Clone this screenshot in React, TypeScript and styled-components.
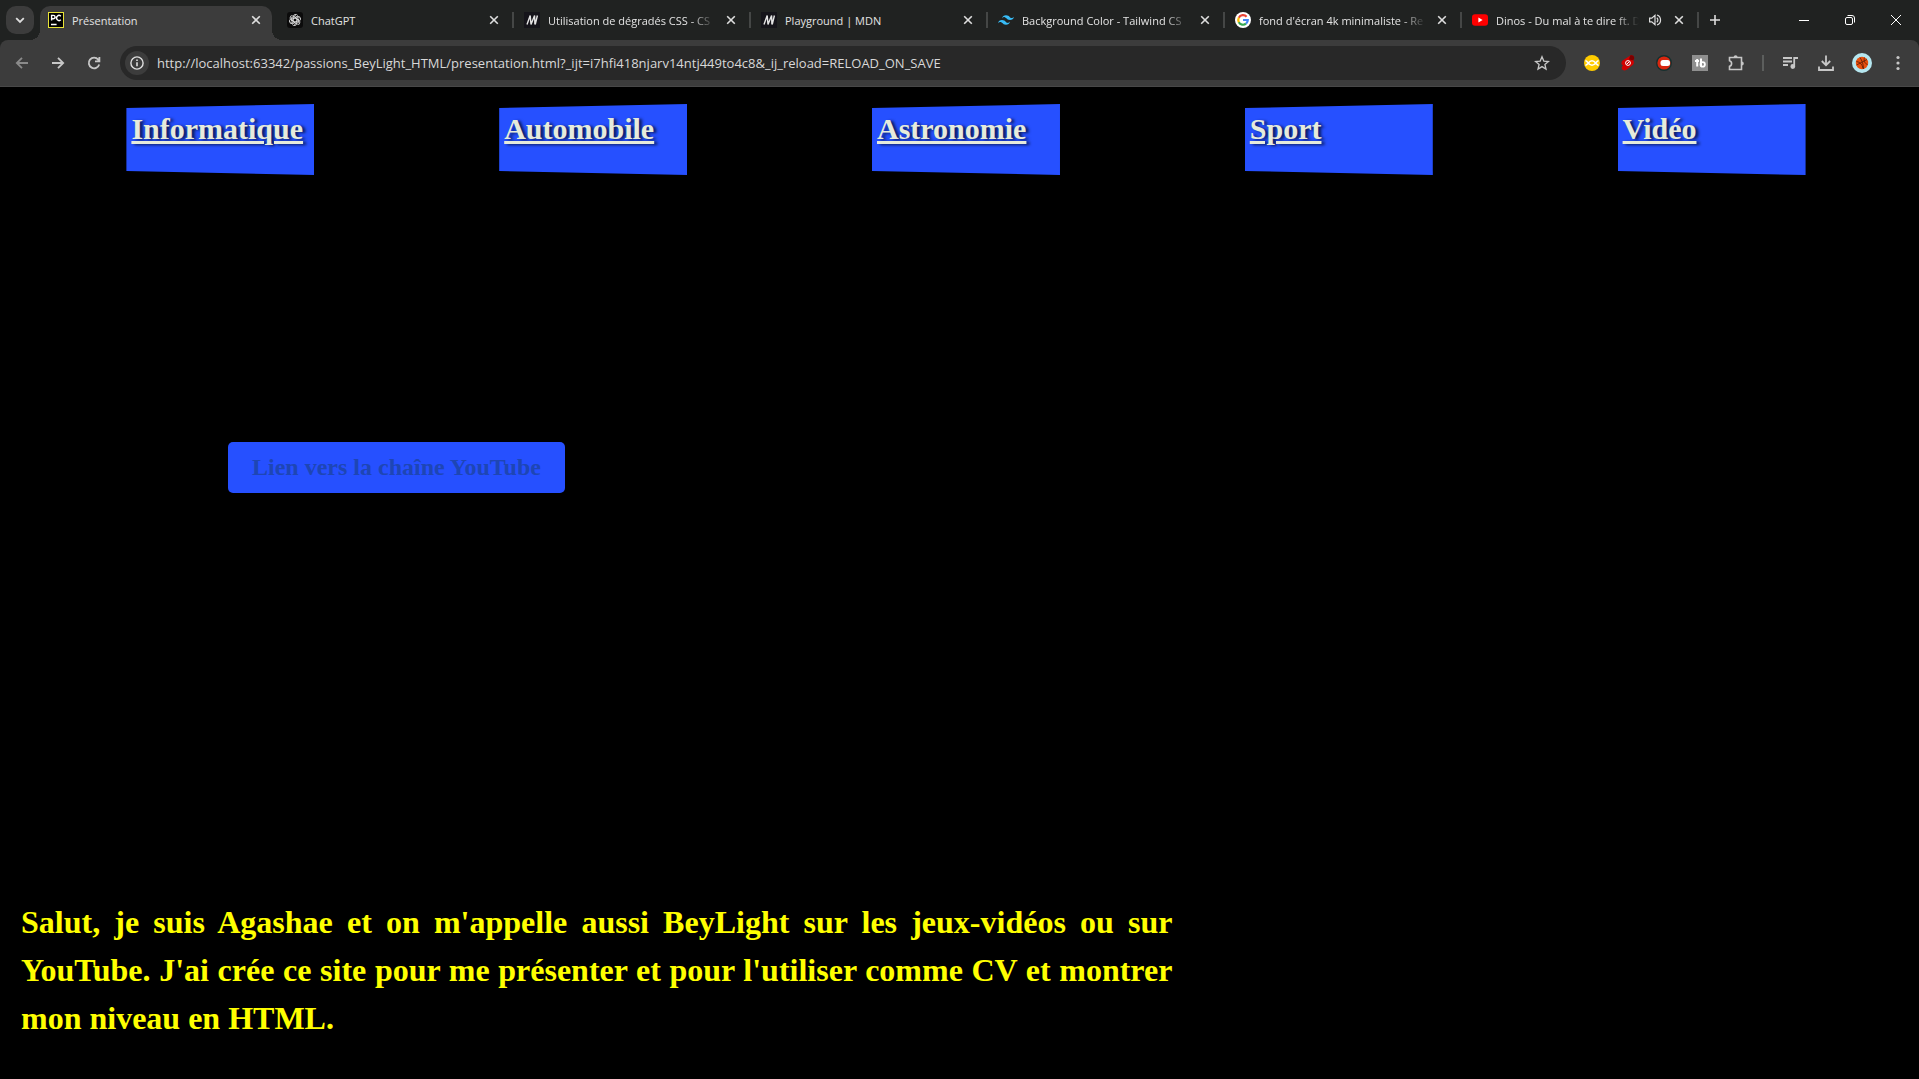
import React from 'react';
import styled, { createGlobalStyle, css } from 'styled-components';

const GlobalStyle = createGlobalStyle`
  *, *::before, *::after { box-sizing: border-box; }
  html, body, #root { height: 100%; }
  body {
    margin: 0;
    background: #000;
    overflow: hidden;
    font-family: "Liberation Serif", "Times New Roman", serif;
  }
`;

const Screen = styled.div`
  min-height: 100%;
  display: flex;
  flex-direction: column;
`;

const Browser = styled.header`
  background: #202221;
  color: #e3e3e3;
  font-family: "Open Sans", "Noto Sans", sans-serif;
`;

const TabStrip = styled.div`
  display: flex;
  height: 40px;
  padding-left: 6px;
`;

const iconButton = css`
  display: flex;
  align-items: center;
  justify-content: center;
  flex: none;
  padding: 0;
  border: 0;
  background: transparent;
  color: #dedede;
`;

const TabSearch = styled.button`
  ${iconButton}
  width: 28px;
  height: 28px;
  margin: 6px 6px 0 0;
  border-radius: 10px;
  background: #3c3c3c;
`;

const Tab = styled.div<{ $active?: boolean; $line?: boolean }>`
  position: relative;
  display: flex;
  align-items: center;
  gap: 8px;
  flex: 0 1 237px;
  min-width: 0;
  height: 40px;
  padding: 0 11px;
  ${p => p.$line && css`
    &::after {
      content: '';
      position: absolute;
      right: -1px;
      top: 12px;
      width: 2px;
      height: 16px;
      background: #454746;
    }
  `}
  ${p => p.$active && css`
    flex-basis: 232px;
    height: 34px;
    margin: 6px 4px 0 0;
    padding: 0 8px 6px 8px;
    border-radius: 10px 10px 0 0;
    background: #3c3c3c;
    &::before, &::after {
      content: '';
      position: absolute;
      bottom: 0;
      width: 10px;
      height: 10px;
    }
    &::before {
      left: -10px;
      background: radial-gradient(circle at 0 0, transparent 10px, #3c3c3c 10px);
    }
    &::after {
      right: -10px;
      background: radial-gradient(circle at 100% 0, transparent 10px, #3c3c3c 10px);
    }
  `}
`;

const TabTitle = styled.span<{ $fade?: boolean }>`
  flex: 1;
  min-width: 0;
  padding-top: 2px;
  overflow: hidden;
  white-space: nowrap;
  font-size: 11px;
  line-height: 16px;
  ${p => p.$fade && css`
    mask-image: linear-gradient(to left, transparent, #000 24px);
  `}
`;

const SmallButton = styled.button`
  ${iconButton}
  width: 16px;
  height: 16px;
`;

const NewTab = styled.button`
  ${iconButton}
  width: 28px;
  height: 28px;
  margin: 6px 0 0 3px;
`;

const WindowControls = styled.div`
  display: flex;
  margin-left: auto;
`;

const WindowButton = styled.button`
  ${iconButton}
  width: 46px;
  height: 40px;
  color: #fff;
`;

const Toolbar = styled.div`
  display: flex;
  align-items: center;
  height: 47px;
  padding: 0 3px 1px 4px;
  border-radius: 8px 8px 0 0;
  border-bottom: 1px solid #484848;
  background: #3c3c3c;
`;

const ToolButton = styled.button<{ $dim?: boolean }>`
  ${iconButton}
  width: 36px;
  height: 34px;
  color: ${p => (p.$dim ? '#8a8a8a' : '#c7c7c7')};
`;

const AddressBar = styled.div`
  display: flex;
  align-items: center;
  flex: 1;
  min-width: 0;
  height: 34px;
  margin: 0 8px;
  padding: 0 6px 0 5px;
  border-radius: 17px;
  background: #282828;
`;

const SiteInfo = styled.button`
  ${iconButton}
  width: 24px;
  height: 24px;
  border-radius: 50%;
  background: #3c3c3c;
`;

const Address = styled.input`
  flex: 1;
  min-width: 0;
  margin: 0;
  padding: 0 0 0 8px;
  border: 0;
  outline: 0;
  background: transparent;
  color: #d8d8d8;
  font: 13px/20px "Open Sans", "Noto Sans", sans-serif;
`;

const ToolDivider = styled.span`
  flex: none;
  width: 2px;
  height: 16px;
  margin: 0 8px;
  background: #5c5e5d;
`;

const Page = styled.main`
  flex: 1;
  display: flex;
  flex-direction: column;
  align-items: flex-start;
  background: #000;
`;

const Passions = styled.nav`
  display: flex;
  justify-content: space-around;
  align-self: stretch;
  padding: 17px 21px 0 34px;
`;

const Passion = styled.a`
  width: 188px;
  height: 71px;
  padding: 8px 5px;
  background: #2650ff;
  clip-path: polygon(0 4px, 100% 0, 100% 100%, 0 calc(100% - 4px));
  color: #e6ebdc;
  font-size: 30px;
  font-weight: bold;
  line-height: 34px;
  text-decoration: underline;
  text-shadow: 3px 1px 3px #0a1c60;
`;

const ChannelLink = styled.a`
  margin: 267px 0 0 228px;
  padding: 12px 24px;
  border-radius: 5px;
  background: #2650ff;
  color: #1e46b4;
  font-size: 24px;
  font-weight: bold;
  line-height: 27px;
  text-decoration: none;
`;

const Introduction = styled.p`
  width: 60%;
  margin: auto 0 0 21px;
  padding-bottom: 37px;
  color: #ff0;
  font-size: 32px;
  font-weight: bold;
  line-height: 48px;
  text-align: justify;
`;

const CloseIcon = () => (
  <svg width="16" height="16" viewBox="0 0 16 16" stroke="currentColor" strokeWidth="1.6">
    <path d="M4.2 4.2l7.6 7.6M11.8 4.2l-7.6 7.6" />
  </svg>
);

const PyCharmIcon = () => (
  <svg width="16" height="16" viewBox="0 0 16 16">
    <rect x=".5" y=".5" width="15" height="15" fill="#000" stroke="#e8e337" />
    <g fill="none" stroke="#fff" strokeWidth="1.4">
      <path d="M3.6 8.6V3.4h1.8a1.6 1.6 0 0 1 0 3.3H3.6M12.8 4.2a2.5 2.5 0 1 0 0 3.6M3 12.5h5.6" />
    </g>
  </svg>
);

const ChatGptIcon = () => (
  <svg width="16" height="16" viewBox="0 0 16 16">
    <rect width="16" height="16" rx="3" fill="#0b0b0b" />
    <g fill="none" stroke="#ddd" strokeWidth=".9">
      {[0, 60, 120, 180, 240, 300].map(a => (
        <path key={a} transform={`rotate(${a} 8 8)`} d="M6 9.2V5a2.6 2.6 0 0 1 4.8-1.4M6.1 6.8l3.5-2 2.6 1.5" />
      ))}
    </g>
  </svg>
);

const MdnIcon = () => (
  <svg width="16" height="16" viewBox="0 0 16 16">
    <rect width="16" height="16" fill="#15141a" />
    <path d="M3 12.5L6.2 3.5 7 12.5 10.6 3.5l.3 9M13.4 3.5l-2.2 9" fill="none" stroke="#e4e4e4" strokeWidth="1.4" />
  </svg>
);

const TailwindIcon = () => (
  <svg width="16" height="16" viewBox="0 0 24 24" fill="#38bdf8">
    <path d="M12 4.8c-3.2 0-5.2 1.6-6 4.8 1.2-1.6 2.6-2.2 4.2-1.8.91.23 1.57.89 2.29 1.62C13.67 10.62 15.03 12 18 12c3.2 0 5.2-1.6 6-4.8-1.2 1.6-2.6 2.2-4.2 1.8-.91-.23-1.57-.89-2.29-1.62C16.34 6.18 14.97 4.8 12 4.8zM6 12c-3.2 0-5.2 1.6-6 4.8 1.2-1.6 2.6-2.2 4.2-1.8.91.23 1.57.89 2.29 1.62C7.67 17.82 9.03 19.2 12 19.2c3.2 0 5.2-1.6 6-4.8-1.2 1.6-2.6 2.2-4.2 1.8-.91-.23-1.57-.89-2.29-1.62C10.33 13.38 8.97 12 6 12z" />
  </svg>
);

const GoogleIcon = () => (
  <svg width="16" height="16" viewBox="0 0 16 16">
    <circle cx="8" cy="8" r="8" fill="#fff" />
    <g fill="none" strokeWidth="2.2">
      <path d="M11.6 4.7A4.8 4.8 0 0 0 3.8 5.7" stroke="#ea4335" />
      <path d="M3.9 5.6a4.8 4.8 0 0 0 0 4.8" stroke="#fbbc05" />
      <path d="M3.8 10.3a4.8 4.8 0 0 0 7.2 1.4" stroke="#34a853" />
      <path d="M8 8h4.8a4.8 4.8 0 0 1-1.7 3.6" stroke="#4285f4" />
    </g>
  </svg>
);

const YouTubeIcon = () => (
  <svg width="16" height="16" viewBox="0 0 16 16">
    <rect y="2.3" width="16" height="11.4" rx="3" fill="#f00" />
    <path d="M6.4 5.6v4.8L10.6 8z" fill="#fff" />
  </svg>
);

const stroke = { fill: 'none', stroke: 'currentColor', strokeWidth: 1.8 } as const;

const SpeakerIcon = () => (
  <svg width="16" height="16" viewBox="0 0 16 16" {...stroke} strokeWidth="1.2">
    <path d="M2.6 6.2h2.2L8 3.4v9.2L4.8 9.8H2.6z" />
    <path d="M9.8 5.8a2.8 2.8 0 0 1 0 4.4M10 3a5.3 5.3 0 0 1 0 10" />
  </svg>
);

const ArrowIcon = ({ back }: { back?: boolean }) => (
  <svg width="16" height="16" viewBox="0 0 16 16" {...stroke}>
    {back ? <path d="M14 8H3M8 2.8L2.8 8 8 13.2" /> : <path d="M2 8h11M8 2.8L13.2 8 8 13.2" />}
  </svg>
);

const ReloadIcon = () => (
  <svg width="16" height="16" viewBox="0 0 16 16" {...stroke}>
    <path d="M13.2 9.4A5.3 5.3 0 1 1 12.2 4.6l1 1.2M13.4 2v4.4H9" />
  </svg>
);

const InfoIcon = () => (
  <svg width="16" height="16" viewBox="0 0 16 16" {...stroke} strokeWidth="1.4">
    <circle cx="8" cy="8" r="6.1" />
    <path d="M8 7.2v4M8 4.6v1.5" strokeWidth="1.6" />
  </svg>
);

const StarIcon = () => (
  <svg width="16" height="16" viewBox="0 0 16 16" {...stroke} strokeWidth="1.3">
    <path d="M8 1.8l1.8 4.3 4.6.4-3.5 3 1.1 4.6L8 11.6l-4 2.5 1.1-4.6-3.5-3 4.6-.4z" />
  </svg>
);

const CoinIcon = () => (
  <svg width="16" height="16" viewBox="0 0 16 16">
    <circle cx="8" cy="8" r="8" fill="#fc0" />
    <path d="M1.4 5.8C4 5.8 4.400 10.200 8 10.200S12 5.800 14.600 5.800M1.400 10.200C4 10.200 4.400 5.800 8 5.800s4 4.400 6.600 4.400" fill="none" stroke="#fff" strokeWidth="1.5" />
  </svg>
);

const ShortsIcon = () => (
  <svg width="16" height="16" viewBox="0 0 16 16">
    <path d="M3 5.2L10 .7c2.2-1 4.2.4 4.2 2.2 0 1.1-.5 1.900-1.500 2.400 1.300.4 1.300 1.600 1.100 2.800-.1.900-.6 1.600-1.400 2.100L6.300 15c-2 1.200-4.500 0-4.600-2 0-1.200.5-2 1.500-2.500C1.900 10.100 1.300 9 1.500 7.700 1.600 6.600 2.100 5.800 3 5.200z" fill="#d00000" />
    <path d="M10 .7c2.200-1 4.200.4 4.200 2.200 0 1.100-.5 1.900-1.500 2.400L9 4.500z" fill="#7c0000" />
    <circle cx="8" cy="8" r="2.400" fill="none" stroke="#fff" strokeWidth="1" />
    <path d="M6.500 9.500l3-3" stroke="#fff" />
  </svg>
);

const BlockerIcon = () => (
  <svg width="16" height="16" viewBox="0 0 16 16">
    <circle cx="8" cy="8" r="7.300" fill="#d8260f" stroke="#15302f" strokeWidth="1.400" />
    <rect x="4.500" y="5" width="9.500" height="6" rx="2.500" fill="#fff" />
  </svg>
);

const BuddyIcon = () => (
  <svg width="16" height="16" viewBox="0 0 16 16">
    <rect width="16" height="16" fill="#8f8f8f" />
    <path d="M3 6h4M5.200 4v7.500M9 3.500v8" stroke="#fff" strokeWidth="2" />
    <circle cx="10.700" cy="9.400" r="2.200" fill="none" stroke="#fff" strokeWidth="1.800" />
  </svg>
);

const PuzzleIcon = () => (
  <svg width="18" height="18" viewBox="0 0 18 18" {...stroke} strokeWidth="1.600">
    <path d="M2.500 3.500H14.500V15.500H2.500V12.300C5.300 11.700 5.300 7.300 2.500 6.700z" />
    <path d="M6.600 3.200a2 2 0 0 1 4 0zM14.800 7.500a2 2 0 0 1 0 4z" fill="currentColor" stroke="none" />
  </svg>
);

const MediaIcon = () => (
  <svg width="16" height="16" viewBox="0 0 16 16" {...stroke}>
    <path d="M1 3h9M1 6.500h9M1 10h5M12.200 11.500V3H16" />
    <circle cx="10.800" cy="11.500" r="1.500" fill="currentColor" />
  </svg>
);

const DownloadIcon = () => (
  <svg width="18" height="18" viewBox="0 0 18 18" {...stroke}>
    <path d="M9 1.500v9.500M4.800 7L9 11.200 13.200 7M2 12.500V16h14v-3.500" />
  </svg>
);

const AvatarIcon = () => (
  <svg width="20" height="20" viewBox="0 0 20 20">
    <circle cx="10" cy="10" r="10" fill="#b5e6ef" />
    <circle cx="10" cy="10" r="6.200" fill="#e8500e" />
    <path d="M4.500 12L15 6.500M8 4.500c2 3 3.500 7 3.500 11.500M4.500 8.500c3.500.5 6 3 6.500 7M15.500 11.500c-3-1-4-4-3-7" fill="none" stroke="#5a1c08" strokeWidth=".8" />
  </svg>
);

const DotsIcon = () => (
  <svg width="16" height="16" viewBox="0 0 16 16" fill="currentColor">
    <circle cx="8" cy="2.500" r="1.600" />
    <circle cx="8" cy="8" r="1.600" />
    <circle cx="8" cy="13.500" r="1.600" />
  </svg>
);

const tabs = [
  { title: 'Présentation', Icon: PyCharmIcon, active: true },
  { title: 'ChatGPT', Icon: ChatGptIcon },
  { title: 'Utilisation de dégradés CSS - CS', Icon: MdnIcon, fade: true },
  { title: 'Playground | MDN', Icon: MdnIcon },
  { title: 'Background Color - Tailwind CS', Icon: TailwindIcon, fade: true },
  { title: "fond d'écran 4k minimaliste - Re", Icon: GoogleIcon, fade: true },
  { title: 'Dinos - Du mal à te dire ft. D', Icon: YouTubeIcon, fade: true, sound: true },
];

const extensions = [
  { label: 'Extension 1', Icon: CoinIcon },
  { label: 'Extension 2', Icon: ShortsIcon },
  { label: 'Extension 3', Icon: BlockerIcon },
  { label: 'Extension 4', Icon: BuddyIcon },
  { label: 'Extensions', Icon: PuzzleIcon },
];

const passions = ['Informatique', 'Automobile', 'Astronomie', 'Sport', 'Vidéo'];

const url =
  'http://localhost:63342/passions_BeyLight_HTML/presentation.html?_ijt=i7hfi418njarv14ntj449to4c8&_ij_reload=RELOAD_ON_SAVE';

export default function App() {
  return (
    <Screen>
      <GlobalStyle />
      <Browser>
        <TabStrip>
          <TabSearch aria-label="Rechercher des onglets">
            <svg width="12" height="12" viewBox="0 0 12 12" {...stroke}>
              <path d="M2.200 4.200L6 8l3.800-3.800" />
            </svg>
          </TabSearch>
          {tabs.map(({ title, Icon, active, fade, sound }) => (
            <Tab key={title} $active={active} $line={!active}>
              <Icon />
              <TabTitle $fade={fade}>{title}</TabTitle>
              {sound && (
                <SmallButton aria-label="Couper le son">
                  <SpeakerIcon />
                </SmallButton>
              )}
              <SmallButton aria-label="Fermer l'onglet">
                <CloseIcon />
              </SmallButton>
            </Tab>
          ))}
          <NewTab aria-label="Nouvel onglet">
            <svg width="12" height="12" viewBox="0 0 12 12" {...stroke} strokeWidth="1.600">
              <path d="M6 1v10M1 6h10" />
            </svg>
          </NewTab>
          <WindowControls>
            <WindowButton aria-label="Réduire">
              <svg width="10" height="10" viewBox="0 0 10 10" stroke="currentColor">
                <path d="M0 5.500h10" />
              </svg>
            </WindowButton>
            <WindowButton aria-label="Restaurer">
              <svg width="10" height="10" viewBox="0 0 10 10" fill="none" stroke="currentColor">
                <rect x=".5" y="2.500" width="7" height="7" rx="1.500" />
                <path d="M2.500 .5H7a2.500 2.500 0 0 1 2.500 2.500v4.500" />
              </svg>
            </WindowButton>
            <WindowButton aria-label="Fermer">
              <svg width="10" height="10" viewBox="0 0 10 10" stroke="currentColor">
                <path d="M0 0l10 10M10 0L0 10" />
              </svg>
            </WindowButton>
          </WindowControls>
        </TabStrip>
        <Toolbar>
          <ToolButton $dim aria-label="Précédent"><ArrowIcon back /></ToolButton>
          <ToolButton aria-label="Suivant"><ArrowIcon /></ToolButton>
          <ToolButton aria-label="Actualiser"><ReloadIcon /></ToolButton>
          <AddressBar>
            <SiteInfo aria-label="Informations sur le site"><InfoIcon /></SiteInfo>
            <Address aria-label="Adresse" defaultValue={url} spellCheck={false} />
            <ToolButton aria-label="Ajouter aux favoris"><StarIcon /></ToolButton>
          </AddressBar>
          {extensions.map(({ label, Icon }) => (
            <ToolButton key={label} aria-label={label}><Icon /></ToolButton>
          ))}
          <ToolDivider />
          <ToolButton aria-label="Contrôle des médias"><MediaIcon /></ToolButton>
          <ToolButton aria-label="Téléchargements"><DownloadIcon /></ToolButton>
          <ToolButton aria-label="Profil"><AvatarIcon /></ToolButton>
          <ToolButton aria-label="Menu"><DotsIcon /></ToolButton>
        </Toolbar>
      </Browser>
      <Page>
        <Passions>
          {passions.map(name => (
            <Passion key={name} href={`#${name}`}>{name}</Passion>
          ))}
        </Passions>
        <ChannelLink href="#youtube">Lien vers la chaîne YouTube</ChannelLink>
        <Introduction>
          Salut, je suis Agashae et on m'appelle aussi BeyLight sur les jeux-vidéos ou sur YouTube.
          J'ai crée ce site pour me présenter et pour l'utiliser comme CV et montrer mon niveau en HTML.
        </Introduction>
      </Page>
    </Screen>
  );
}
